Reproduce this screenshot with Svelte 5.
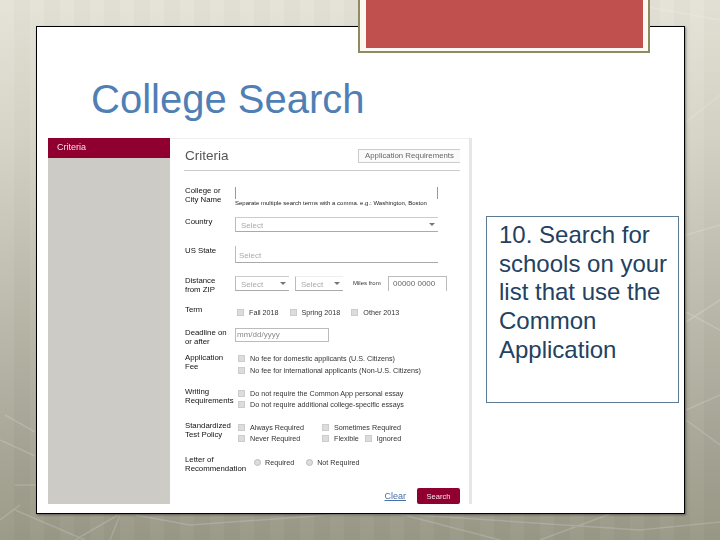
<script>
  let termOptions = ['Fall 2018', 'Spring 2018', 'Other 2013'];
</script>

<main class="desktop">
  <svg class="streaks" viewBox="0 0 720 540" aria-hidden="true">
    <path d="M5 415 L35 432 M0 440 L35 456 M15 485 L36 485 M15 510 L85 540 M110 540 L120 515 M75 540 L118 515 M135 515 L190 525 L330 515 L400 514 L500 540 M0 520 L20 505 M400 514 L640 530 L720 522 M540 540 L610 514 M686 235 L720 225 M686 312 L720 330 M686 322 L720 300 M686 420 L720 445 M686 410 L720 395 M500 26 L560 0 M610 0 L720 20 M686 122 L720 95" />
  </svg>

  <section class="slide">
    <div class="tab"></div>
    <h1>College Search</h1>

    <div class="content">
      <div class="shot">
        <aside class="sidebar">
          <div class="side-item">Criteria</div>
        </aside>

        <div class="form">
          <header class="form-head">
            <h2>Criteria</h2>
            <button class="req">Application Requirements</button>
          </header>

          <div class="row college">
            <div class="lbl">College or<br />City Name</div>
            <div>
              <div class="name-box"></div>
              <div class="hint">Separate multiple search terms with a comma. e.g.: Washington, Boston</div>
            </div>
          </div>

          <div class="row country">
            <div class="lbl">Country</div>
            <div class="sel"><span>Select</span><i></i></div>
          </div>

          <div class="row state">
            <div class="lbl">US State</div>
            <div class="sel"><span>Select</span></div>
          </div>

          <div class="row distance">
            <div class="lbl">Distance<br />from ZIP</div>
            <div class="dist">
              <div class="sel small"><span>Select</span><i></i></div>
              <div class="sel small"><span>Select</span><i></i></div>
              <span class="miles">Miles from</span>
              <div class="zip">00000 0000</div>
            </div>
          </div>

          <div class="row term">
            <div class="lbl">Term</div>
            <div class="opts">
              {#each termOptions as t}
                <label><b class="check"></b>{t}</label>
              {/each}
            </div>
          </div>

          <div class="row deadline">
            <div class="lbl">Deadline on<br />or after</div>
            <div class="date">mm/dd/yyyy</div>
          </div>

          <div class="row fee">
            <div class="lbl">Application<br />Fee</div>
            <div class="stack">
              <label><b class="check"></b>No fee for domestic applicants (U.S. Citizens)</label>
              <label><b class="check"></b>No fee for international applicants (Non-U.S. Citizens)</label>
            </div>
          </div>

          <div class="row writing">
            <div class="lbl">Writing<br />Requirements</div>
            <div class="stack">
              <label><b class="check"></b>Do not require the Common App personal essay</label>
              <label><b class="check"></b>Do not require additional college-specific essays</label>
            </div>
          </div>

          <div class="row testing">
            <div class="lbl">Standardized<br />Test Policy</div>
            <div class="tests">
              <label><b class="check"></b>Always Required</label>
              <label><b class="check"></b>Sometimes Required</label>
              <label><b class="check"></b>Never Required</label>
              <div class="pair">
                <label><b class="check"></b>Flexible</label>
                <label><b class="check"></b>Ignored</label>
              </div>
            </div>
          </div>

          <div class="row letter">
            <div class="lbl">Letter of<br />Recommendation</div>
            <div class="radios">
              <label><b class="radio"></b>Required</label>
              <label><b class="radio"></b>Not Required</label>
            </div>
          </div>

          <footer class="actions">
            <span class="clear">Clear</span>
            <button class="search">Search</button>
          </footer>
        </div>
      </div>

      <div class="note">10. Search for schools on your list that use the Common Application</div>
    </div>
  </section>
</main>

<style>
  :global(body) {
    margin: 0;
    font-family: "Liberation Sans", Arial, sans-serif;
  }

  .desktop {
    position: relative;
    box-sizing: border-box;
    width: 720px;
    height: 540px;
    padding: 26px 35px 26px 36px;
    overflow: hidden;
    background:
      repeating-linear-gradient(90deg, rgba(255, 255, 255, 0.025) 0 14px, rgba(0, 0, 0, 0.015) 14px 30px),
      linear-gradient(180deg, #e5e3d7 0%, #d6d4c6 25%, #b9b7a8 60%, #a5a393 85%, #9a9887 100%);
  }

  .streaks {
    position: absolute;
    inset: 0;
    width: 720px;
    height: 540px;
  }

  .streaks path {
    fill: none;
    stroke: rgba(255, 255, 255, 0.16);
    stroke-width: 1.5;
  }

  .slide {
    position: relative;
    box-sizing: border-box;
    height: 488px;
    padding: 49px 0 0 11px;
    background: #fff;
    border: 1px solid #000;
    box-shadow: 1px 1px 2px rgba(0, 0, 0, 0.4);
  }

  .tab {
    position: absolute;
    top: -27px;
    left: 323px;
    box-sizing: border-box;
    width: 288px;
    height: 51px;
    background: #c0504d;
    border: solid #fbf9f2;
    border-width: 0 5px 3px 6px;
    outline: 2px solid #8f8a62;
  }

  h1 {
    margin: 0 0 15px 43px;
    height: 47px;
    font-size: 40px;
    line-height: 47px;
    font-weight: 400;
    color: #4f7fb5;
  }

  .content {
    display: flex;
    align-items: flex-start;
  }

  .shot {
    display: flex;
    width: 424px;
    height: 366px;
    flex: none;
    filter: blur(0.35px);
    color: #333;
  }

  .sidebar {
    width: 122px;
    flex: none;
    background: #cdcbc5;
  }

  .side-item {
    height: 20px;
    padding-left: 9px;
    box-sizing: border-box;
    background: #8f0030;
    color: #f4dfe4;
    font-size: 9px;
    line-height: 19px;
  }

  .form {
    box-sizing: border-box;
    flex: 1;
    padding: 0 9px 0 14px;
    border-right: 3px solid #e6e6e2;
    box-shadow: inset 0 1px 0 #eee;
    font-size: 7.5px;
    line-height: 9px;
  }

  .form-head {
    display: flex;
    justify-content: space-between;
    align-items: center;
    height: 33px;
    padding-top: 3px;
    box-sizing: border-box;
    border-bottom: 1px solid #ccc;
  }

  h2 {
    margin: 0 0 0 1px;
    font-size: 13.5px;
    font-weight: 400;
    color: #555;
  }

  button {
    font: inherit;
    border: 0;
    padding: 0;
  }

  .req {
    width: 102px;
    height: 14px;
    border: 1px solid #ccc;
    border-right: 0;
    background: #fafafa;
    color: #666;
    font-size: 7.8px;
  }

  .row {
    display: grid;
    grid-template-columns: 51px 1fr;
    box-sizing: border-box;
  }

  .lbl {
    padding-left: 1px;
    font-size: 7.8px;
    line-height: 9px;
    color: #111;
    white-space: nowrap;
  }

  .college { height: 44px; padding-top: 15px; }
  .country { height: 30px; padding-top: 2px; }
  .state { height: 31px; padding-top: 1px; }
  .distance { height: 29px; }
  .term { height: 22px; }
  .deadline { height: 26px; padding-top: 1px; }
  .fee { height: 34px; }
  .writing { height: 34px; }
  .testing { height: 34px; }
  .letter { height: 33px; }

  .name-box {
    box-sizing: border-box;
    width: 203px;
    height: 12px;
    margin-top: 1px;
    border-left: 1px solid #999;
    border-right: 1px solid #999;
  }

  .hint {
    font-size: 6px;
    line-height: 9px;
    color: #222;
    white-space: nowrap;
  }

  .sel {
    position: relative;
    box-sizing: border-box;
    width: 203px;
    height: 15px;
    border-left: 1px solid #bbb;
    border-bottom: 1px solid #aaa;
    border-top: 1px solid #ccc;
    color: #aaa;
    padding: 3px 0 0 5px;
    font-size: 8px;
  }

  .sel i {
    position: absolute;
    right: 3px;
    top: 5px;
    border: 3px solid transparent;
    border-top-color: #777;
  }

  .state .sel {
    height: 17px;
    border-top: 0;
    padding: 5px 0 0 3px;
  }

  .dist {
    display: flex;
    align-items: center;
    height: 15px;
  }

  .sel.small {
    width: 54px;
    margin-right: 6px;
  }

  .sel.small:nth-child(2) {
    width: 48px;
    border-top-color: #eee;
  }

  .miles {
    margin-left: 4px;
    width: 35px;
    font-size: 6px;
    white-space: nowrap;
  }

  .zip {
    box-sizing: border-box;
    width: 59px;
    height: 15px;
    border: 1px solid #bbb;
    border-bottom: 0;
    padding-left: 4px;
    color: #666;
    line-height: 14px;
    font-size: 8px;
    white-space: nowrap;
  }

  .opts {
    display: flex;
    gap: 11px;
    height: 9px;
    padding: 3px 0 0 2px;
  }

  label {
    display: flex;
    align-items: center;
    height: 9px;
    white-space: nowrap;
    color: #333;
    font-size: 7.2px;
  }

  .check {
    box-sizing: border-box;
    width: 7px;
    height: 7px;
    margin-right: 5px;
    background: #dcdcdc;
    border: 1px solid #ccc;
    flex: none;
  }

  .radio {
    box-sizing: border-box;
    width: 7px;
    height: 7px;
    margin-right: 4px;
    border-radius: 50%;
    background: #ddd;
    border: 1px solid #bbb;
    flex: none;
  }

  .date {
    box-sizing: border-box;
    width: 94px;
    height: 14px;
    border: 1px solid #bbb;
    color: #888;
    padding-left: 1px;
    font-size: 8px;
    line-height: 12px;
  }

  .stack {
    display: flex;
    flex-direction: column;
    gap: 3px;
    padding: 1px 0 0 3px;
  }

  .writing .stack,
  .tests {
    gap: 2px;
    padding-top: 2px;
  }

  .tests {
    display: grid;
    grid-template-columns: 82px auto;
    align-content: start;
    justify-items: start;
    padding-left: 3px;
  }

  .pair {
    display: flex;
    gap: 6px;
  }

  .radios {
    display: flex;
    gap: 12px;
    height: 9px;
    padding: 3px 0 0 19px;
  }

  .actions {
    display: flex;
    justify-content: flex-end;
    align-items: center;
    gap: 11px;
  }

  .clear {
    color: #4a6fa5;
    text-decoration: underline;
    font-size: 9px;
  }

  .search {
    width: 43px;
    height: 16px;
    border-radius: 2px;
    background: #8f0030;
    color: #f3e3e6;
    font-size: 7.5px;
  }

  .note {
    box-sizing: border-box;
    width: 193px;
    height: 187px;
    margin: 78px 0 0 14px;
    padding: 4px 4px 0 12px;
    border: 1px solid #5d7a94;
    color: #234161;
    font-size: 24px;
    line-height: 28.7px;
    background: #fff;
  }
</style>
